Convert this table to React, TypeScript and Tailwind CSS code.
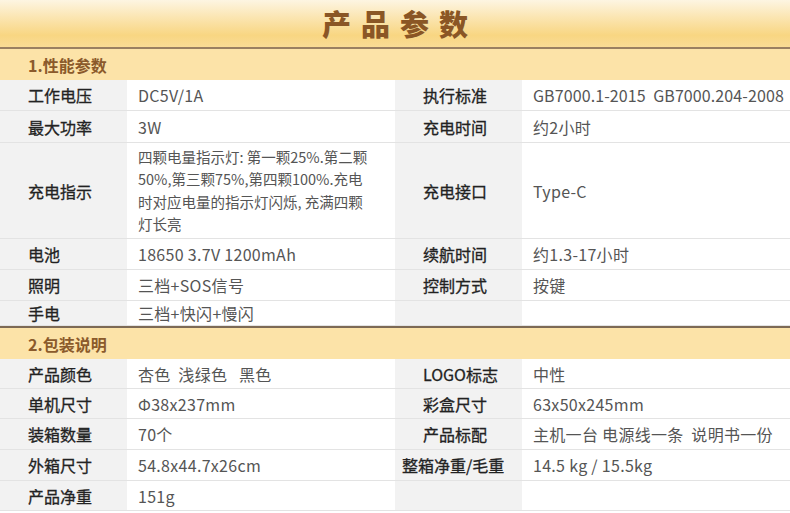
import React from 'react';

type Cell = { label: string; value: React.ReactNode; labelClass?: string };
type Row = { h: string; left: Cell; right: Cell };

const perf: Row[] = [
  { h: 'h-[31px]', left: { label: '工作电压', value: 'DC5V/1A' }, right: { label: '执行标准', value: <span className="tracking-[0.1px]">GB7000.1-2015{'\u00a0\u00a0'}GB7000.204-2008</span> } },
  { h: 'h-[32px]', left: { label: '最大功率', value: '3W' }, right: { label: '充电时间', value: '约2小时' } },
  {
    h: 'h-[96px]',
    left: {
      label: '充电指示',
      value: (
        <span className="block text-[14.5px] leading-[22.5px] tracking-normal">
          四颗电量指示灯: 第一颗25%.第二颗
          <br />
          50%,第三颗75%,第四颗100%.充电
          <br />
          时对应电量的指示灯闪烁, 充满四颗
          <br />
          灯长亮
        </span>
      ),
    },
    right: { label: '充电接口', value: 'Type-C' },
  },
  { h: 'h-[31px]', left: { label: '电池', value: '18650 3.7V 1200mAh' }, right: { label: '续航时间', value: '约1.3-17小时' } },
  { h: 'h-[31px]', left: { label: '照明', value: '三档+SOS信号' }, right: { label: '控制方式', value: '按键' } },
  { h: 'h-[25px]', left: { label: '手电', value: '三档+快闪+慢闪' }, right: { label: '', value: '' } },
];

const pack: Row[] = [
  { h: 'h-[30px]', left: { label: '产品颜色', value: '杏色\u00a0\u00a0浅绿色\u00a0\u00a0\u00a0黑色' }, right: { label: 'LOGO标志', value: '中性' } },
  { h: 'h-[30px]', left: { label: '单机尺寸', value: 'Φ38x237mm' }, right: { label: '彩盒尺寸', value: '63x50x245mm' } },
  { h: 'h-[31px]', left: { label: '装箱数量', value: '70个' }, right: { label: '产品标配', value: '主机一台 电源线一条\u00a0\u00a0说明书一份' } },
  { h: 'h-[31px]', left: { label: '外箱尺寸', value: '54.8x44.7x26cm' }, right: { label: '整箱净重/毛重', value: '14.5 kg / 15.5kg', labelClass: 'pl-[7px]' } },
  { h: 'h-[30px]', left: { label: '产品净重', value: '151g' }, right: { label: '', value: '' } },
];

function Pair({ cell, h }: { cell: Cell; h: string }) {
  return (
    <>
      <div className={`${h} bg-[#f2f2f2] border-b border-[#e3e3e3] flex items-center ${cell.labelClass ?? 'pl-[28px]'} text-[16px] font-normal text-[#222222] [-webkit-text-stroke:0.3px_#222222]`}>
        {cell.label}
      </div>
      <div className={`${h} bg-white border-b border-[#e3e3e3] flex items-center pl-[11px] text-[16px] tracking-[0.3px] text-[#555555]`}>
        {cell.value}
      </div>
    </>
  );
}

function Section({ title, rows }: { title: string; rows: Row[] }) {
  return (
    <>
      <div className="h-[31px] bg-[#fce3a8] flex items-center pl-[28px] text-[16px] font-bold text-[#8b5a2b]">{title}</div>
      <div className="grid grid-cols-[127px_268px_127px_268px]">
        {rows.map((r, i) => (
          <React.Fragment key={i}>
            <Pair cell={r.left} h={r.h} />
            <Pair cell={r.right} h={r.h} />
          </React.Fragment>
        ))}
      </div>
    </>
  );
}

export default function App() {
  return (
    <div
      className="w-[790px] h-[513px] overflow-hidden bg-white"
      style={{ fontFamily: '"Noto Sans CJK SC", "Noto Sans", sans-serif' }}
    >
      <div className="h-[49px] bg-[linear-gradient(to_bottom,#fdf5e2_0%,#fbe6b4_35%,#f8d682_75%,#f9dc95_100%)] flex items-center justify-center border-b-2 border-[#9a8061]">
        <span className="text-[29px] font-black text-[#8a5625] tracking-[10px] pl-[10px] leading-none">产品参数</span>
      </div>
      <Section title="1.性能参数" rows={perf} />
      <div className="h-[2px] bg-[#7d6a55]" />
      <Section title="2.包装说明" rows={pack} />
    </div>
  );
}
